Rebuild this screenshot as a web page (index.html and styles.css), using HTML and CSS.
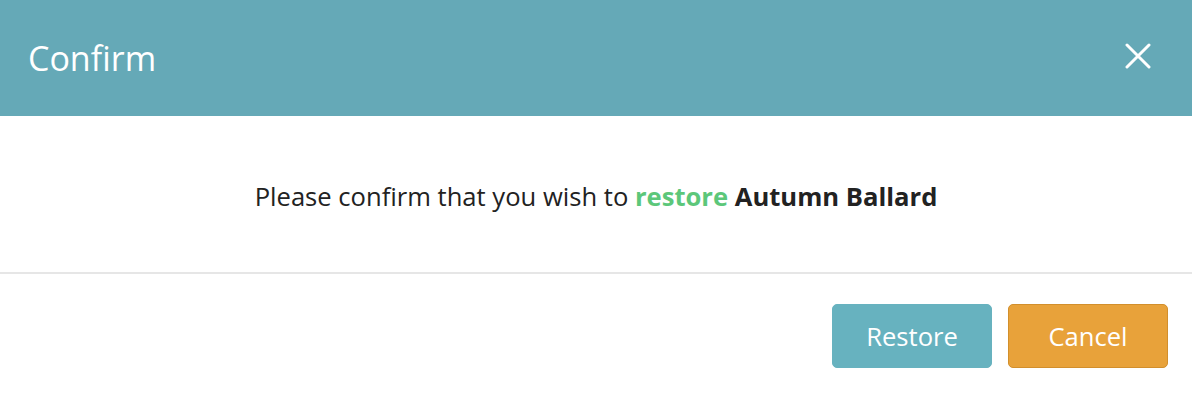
FILE: index.html
```html
<!DOCTYPE html>
<html lang="en">
<head>
<meta charset="utf-8">
<title>Confirm</title>
<link rel="stylesheet" href="styles.css">
</head>
<body>
<div class="modal">
  <header class="modal-header">
    <h1 class="modal-title">Confirm</h1>
    <button class="close" aria-label="Close">
      <svg width="26" height="26" viewBox="0 0 26 26"><path d="M2 2 L24 24 M24 2 L2 24" stroke="#fff" stroke-width="3" stroke-linecap="round"/></svg>
    </button>
  </header>
  <div class="modal-body">
    <p class="message">Please confirm that you wish to <strong class="action">restore</strong> <strong>Autumn Ballard</strong></p>
  </div>
  <footer class="modal-footer">
    <button class="btn btn-restore">Restore</button>
    <button class="btn btn-cancel">Cancel</button>
  </footer>
</div>
</body>
</html>
```

FILE: styles.css
```css
* { box-sizing: border-box; }
html, body { margin: 0; padding: 0; background: #fff; }
body { font-family: "Open Sans", "Liberation Sans", sans-serif; color: #222; }
.modal { width: 1192px; }
.modal-header {
  height: 116px;
  background: #65a9b7;
  display: flex;
  align-items: center;
  justify-content: space-between;
  padding: 0 41px 0 28px;
}
.modal-title {
  margin: 0;
  font-size: 34px;
  font-weight: 400;
  color: #fff;
  line-height: 1;
}
.close {
  background: none;
  border: 0;
  padding: 0;
  width: 26px;
  height: 26px;
  display: flex;
  margin-top: -4px;
}
.modal-body {
  height: 158px;
  padding-top: 6px;
  display: flex;
  align-items: center;
  justify-content: center;
  border-bottom: 2px solid #e6e6e6;
}
.message {
  margin: 0;
  font-size: 25.6px;
  line-height: 1.4;
  color: #222;
}
.message strong { font-weight: 700; }
.message .action { color: #5cc77a; }
.modal-footer {
  display: flex;
  justify-content: flex-end;
  gap: 16px;
  padding: 30px 24px 26px;
}
.btn {
  width: 160px;
  height: 64px;
  border-radius: 5px;
  font-family: "Open Sans", "Liberation Sans", sans-serif;
  font-size: 25.6px;
  color: #fff;
  cursor: pointer;
  padding: 0;
}
.btn-restore { background: #67b2bf; border: 1px solid #67b2bf; }
.btn-cancel { background: #e8a23a; border: 1px solid #d28f2c; }
```
